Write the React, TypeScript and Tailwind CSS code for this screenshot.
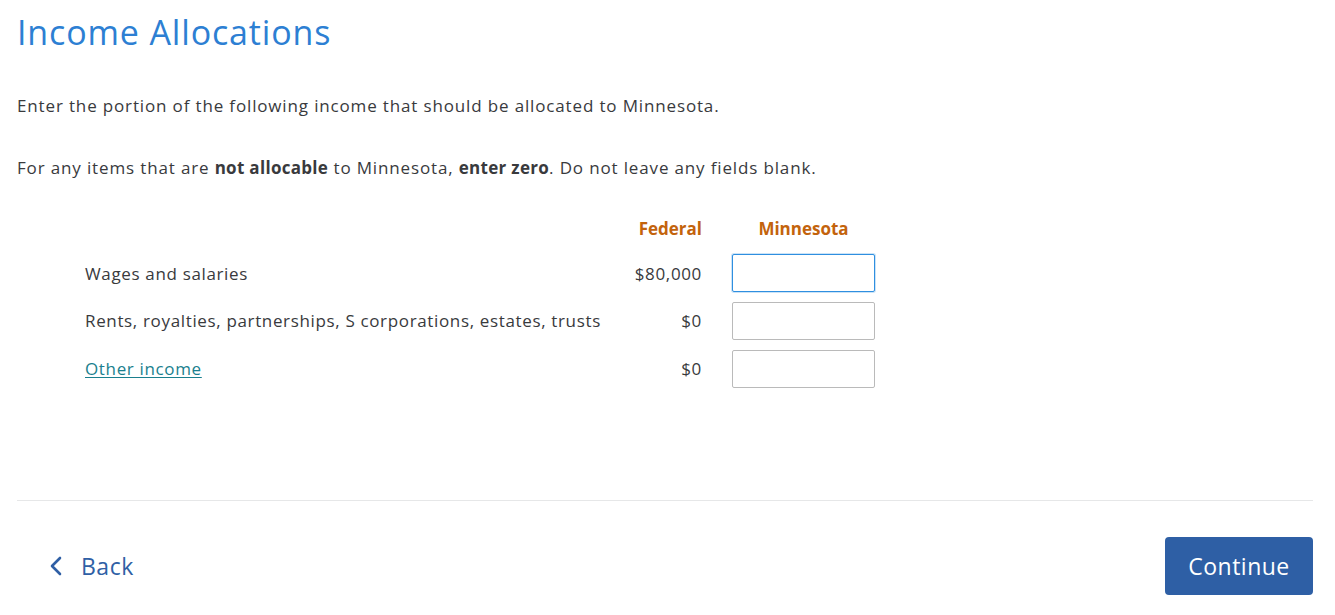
import React from 'react';

const rows = [
  { label: 'Wages and salaries', federal: '$80,000', link: false },
  { label: 'Rents, royalties, partnerships, S corporations, estates, trusts', federal: '$0', link: false },
  { label: 'Other income', federal: '$0', link: true },
];

export default function App() {
  return (
    <div className="min-h-screen bg-white pl-[17px] pr-[22px] text-[#393a3d] font-['Open_Sans','Noto_Sans',sans-serif]">
      {/* Heading */}
      <h1 className="pt-[12px] text-[34px] leading-[40px] tracking-[0.85px] font-normal text-[#2d7fd3]">Income Allocations</h1>

      <p className="mt-[42px] text-[17px] leading-[24px] tracking-[0.85px]">
        Enter the portion of the following income that should be allocated to Minnesota.
      </p>
      <p className="mt-[38px] text-[17px] leading-[24px] tracking-[0.85px]">
        For any items that are <b className="font-bold tracking-[0.3px]">not allocable</b> to Minnesota,{' '}
        <b className="font-bold tracking-[0.3px]">enter zero</b>. Do not leave any fields blank.
      </p>

      {/* Allocation table */}
      <div className="mt-[37px] ml-[68px] grid grid-cols-[517px_100px_173px] items-center text-[17px] tracking-[0.65px]">
        <div />
        <div className="text-right font-bold text-[#c3630c] leading-[24px] tracking-normal">Federal</div>
        <div className="pl-[30px] text-center font-bold text-[#c3630c] leading-[24px] tracking-normal">Minnesota</div>

        {rows.map((r, i) => (
          <React.Fragment key={r.label}>
            <div className={`whitespace-nowrap ${i === 0 ? 'mt-[14px]' : 'mt-[10px]'}`}>
              {r.link ? (
                <a href="#" className="text-[#1a7f8e] underline underline-offset-2">
                  {r.label}
                </a>
              ) : (
                r.label
              )}
            </div>
            <div className={`text-right ${i === 0 ? 'mt-[14px]' : 'mt-[10px]'}`}>{r.federal}</div>
            <input
              type="text"
              className={`ml-[30px] h-[38px] w-[143px] rounded-[2px] border bg-white px-2 outline-none ${
                i === 0 ? 'mt-[13px] border-[#2f8fe0] shadow-[0_0_0_1px_rgba(47,143,224,0.25)]' : 'mt-[10px] border-[#bababa]'
              }`}
            />
          </React.Fragment>
        ))}
      </div>

      {/* Footer */}
      <div className="mt-[112px] border-t border-[#e6e7e8]" />
      <div className="mt-[36px] flex items-center justify-between">
        <button className="ml-[32px] flex items-center gap-[18px] text-[23px] tracking-[0.5px] text-[#2f5fa5]">
          <svg width="14" height="20" viewBox="0 0 14 20" fill="none">
            <path d="M11 2L3 10l8 8" stroke="currentColor" strokeWidth="2.6" strokeLinecap="round" strokeLinejoin="round" />
          </svg>
          <span>Back</span>
        </button>
        <button className="h-[58px] w-[148px] rounded-[4px] bg-[#2e5fa5] text-[23px] tracking-[0.5px] text-white">
          Continue
        </button>
      </div>
    </div>
  );
}
